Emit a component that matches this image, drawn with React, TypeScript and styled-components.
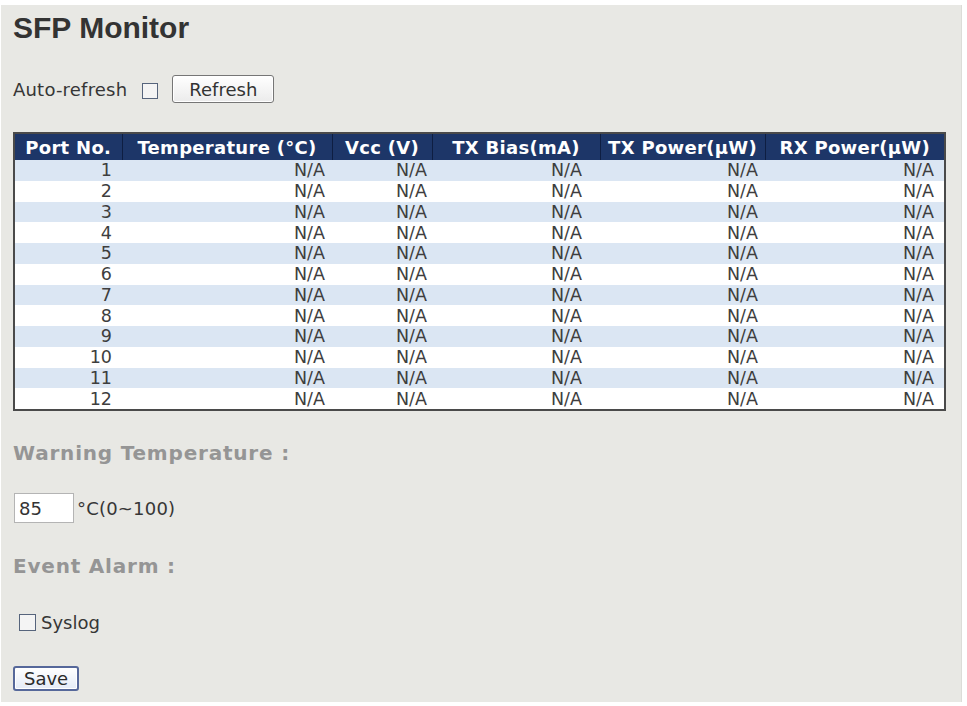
import styled, { createGlobalStyle } from "styled-components";

const GlobalStyle = createGlobalStyle`
  html, body {
    margin: 0;
    padding: 0;
    background: #ffffff;
  }
`;

const Panel = styled.div`
  box-sizing: border-box;
  margin: 5px 0 0 1px;
  width: 961px;
  height: 697px;
  padding: 8px 0 0 12px;
  background: #e8e8e4;
  border-right: 1px solid #dcdcd8;
  font-family: "DejaVu Sans", Verdana, sans-serif;
  color: #363636;
`;

const Title = styled.h1`
  margin: 0;
  font-family: "Liberation Sans", Arial, sans-serif;
  font-size: 30px;
  line-height: 30px;
  font-weight: bold;
  color: #333333;
`;

const RefreshBar = styled.div`
  display: flex;
  align-items: center;
  margin-top: 32px;
  height: 28px;
  font-size: 18px;
`;

const Label = styled.span`
  font-size: 18px;
  letter-spacing: 0.2px;
  color: #363636;
`;

const Check = styled.input.attrs({ type: "checkbox" })<{ $size?: number }>`
  appearance: none;
  box-sizing: border-box;
  width: ${(p) => p.$size ?? 16}px;
  height: ${(p) => p.$size ?? 16}px;
  margin: 0;
  border: 1px solid #56647c;
  background: #f4f4f4;
`;

const AutoCheck = styled(Check)`
  margin: 3px 14px 0 15px;
`;

const Button = styled.button`
  box-sizing: border-box;
  height: 28px;
  padding: 0 16px;
  font-family: "DejaVu Sans", Verdana, sans-serif;
  font-size: 18px;
  color: #333333;
  background: linear-gradient(#ffffff, #ebebeb);
  border: 1px solid #767676;
  border-radius: 3px;
  box-shadow: inset 0 0 0 1px #ffffff;
`;

const SaveButton = styled(Button)`
  height: 25px;
  padding: 0 9px;
  margin-top: 34px;
  border: 2px solid #56689a;
  background: linear-gradient(#ffffff, #e4ebf7);
  color: #2a2a2a;
`;

const Table = styled.table`
  margin-top: 29px;
  border-collapse: collapse;
  table-layout: fixed;
  width: 931px;
  border: 2px solid #4a4a4a;
  font-size: 17.5px;
`;

const HeadCell = styled.th`
  height: 26px;
  padding: 0;
  background: #1d3668;
  color: #ffffff;
  font-size: 18px;
  font-weight: bold;
  letter-spacing: 0.3px;
  text-align: center;
  white-space: nowrap;
  border-left: 1px solid #0e1e42;
`;

const Row = styled.tr<{ $odd: boolean }>`
  background: ${(p) => (p.$odd ? "#dbe6f3" : "#ffffff")};
`;

const Cell = styled.td<{ $pad: number }>`
  height: 20.75px;
  padding: 0 ${(p) => p.$pad}px 0 0;
  line-height: 20px;
  text-align: right;
  color: #3e3e3e;
`;

const Heading = styled.div`
  margin-top: 30px;
  font-size: 20px;
  line-height: 24px;
  font-weight: bold;
  letter-spacing: 0.8px;
  color: #959595;
`;

const EventHeading = styled(Heading)`
  margin-top: 31px;
`;

const TempRow = styled.div`
  display: flex;
  align-items: center;
  margin-top: 28px;
`;

const TempInput = styled.input`
  box-sizing: border-box;
  width: 60px;
  height: 30px;
  margin: 0 3px 0 1px;
  padding: 0 4px;
  font-family: "DejaVu Sans", Verdana, sans-serif;
  font-size: 18px;
  color: #333333;
  background: #ffffff;
  border: 1px solid #b4b4b4;
`;

const SyslogRow = styled.label`
  display: flex;
  align-items: center;
  gap: 5px;
  margin: 34px 0 0 6px;
  height: 20px;
  font-size: 18px;
  color: #363636;
`;

const FormColumn = styled.div`
  display: flex;
  flex-direction: column;
  align-items: flex-start;
`;

type Column = { title: string; width: number; pad: number };

const columns: Column[] = [
  { title: "Port No.", width: 108, pad: 10 },
  { title: "Temperature (°C)", width: 210, pad: 7 },
  { title: "Vcc (V)", width: 100, pad: 5 },
  { title: "TX Bias(mA)", width: 168, pad: 18 },
  { title: "TX Power(μW)", width: 165, pad: 7 },
  { title: "RX Power(μW)", width: 180, pad: 10 },
];

const ports = Array.from({ length: 12 }, (_, i) => i + 1);

const App = () => {
  return (
    <>
      <GlobalStyle />
      <Panel>
        <Title>SFP Monitor</Title>
        <RefreshBar>
          <Label>Auto-refresh</Label>
          <AutoCheck />
          <Button>Refresh</Button>
        </RefreshBar>
        <Table>
          <colgroup>
            {columns.map((c) => (
              <col key={c.title} style={{ width: c.width }} />
            ))}
          </colgroup>
          <thead>
            <tr>
              {columns.map((c) => (
                <HeadCell key={c.title}>{c.title}</HeadCell>
              ))}
            </tr>
          </thead>
          <tbody>
            {ports.map((port) => (
              <Row key={port} $odd={port % 2 === 1}>
                {columns.map((c, i) => (
                  <Cell key={c.title} $pad={c.pad}>
                    {i === 0 ? port : "N/A"}
                  </Cell>
                ))}
              </Row>
            ))}
          </tbody>
        </Table>
        <FormColumn>
          <Heading>Warning Temperature :</Heading>
          <TempRow>
            <TempInput defaultValue="85" />
            <Label>°C(0~100)</Label>
          </TempRow>
          <EventHeading>Event Alarm :</EventHeading>
          <SyslogRow>
            <Check $size={17} />
            Syslog
          </SyslogRow>
          <SaveButton>Save</SaveButton>
        </FormColumn>
      </Panel>
    </>
  );
};

export default App;
